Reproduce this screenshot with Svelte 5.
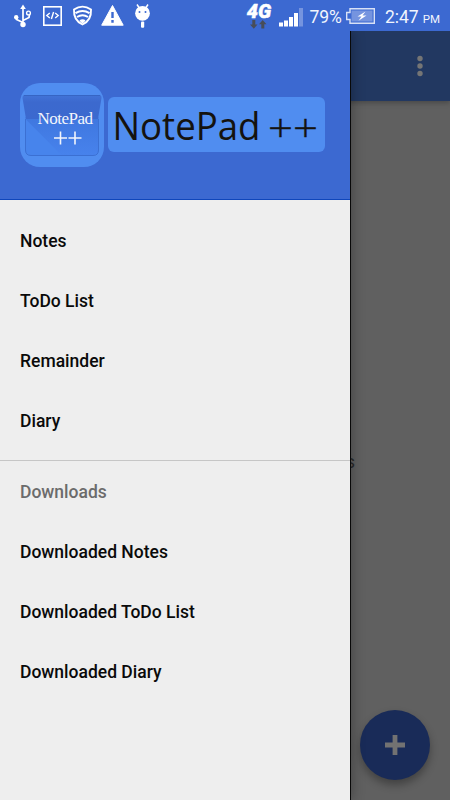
<script lang="ts">
  interface Section {
    title?: string;
    items: string[];
  }

  const sections: Section[] = [
    { items: ['Notes', 'ToDo List', 'Remainder', 'Diary'] },
    { title: 'Downloads', items: ['Downloaded Notes', 'Downloaded ToDo List', 'Downloaded Diary'] },
  ];

  const battery = 79;
  const time = '2:47';

  let selected = $state<string | null>(null);
</script>

<div class="screen">
  <header class="status-bar">
    <svg class="notifications" viewBox="0 0 160 31" width="160" height="31" aria-hidden="true">
      <!-- usb -->
      <g fill="none" stroke="#fff" stroke-width="1.7">
        <path d="M23 7v17M16.5 18v1.5l6.5 3M29.5 14.5l-.5 3-6 3" />
        <circle cx="28.5" cy="13" r="1.9" stroke-width="1.4" />
      </g>
      <path d="M23 4.5l2.8 4.5h-5.6z" fill="#fff" />
      <circle cx="16.2" cy="17.3" r="2.2" fill="#fff" />
      <circle cx="23" cy="24.5" r="2.7" fill="#fff" />
      <!-- developer mode -->
      <rect x="43.8" y="6.8" width="17.4" height="18.4" fill="none" stroke="#fff" stroke-width="1.6" />
      <path d="M49.8 13l-3 2.5 3 2.5M55.2 13l3 2.5-3 2.5M53.6 12l-2.2 7" fill="none" stroke="#fff" stroke-width="1.4" />
      <!-- wifi shield -->
      <path d="M74 9.5q8.5-5.8 17 0c.4 7-3 12.5-8.5 15-5.5-2.5-8.9-8-8.5-15z" fill="none" stroke="#fff" stroke-width="1.9" />
      <path d="M75.5 13.2q7-4.5 14 0M77 17q5.5-3.6 11 0" fill="none" stroke="#fff" stroke-width="2" />
      <path d="M79.5 20.2q3-1.8 6 0-.8 2-3 3.2-2.2-1.2-3-3.2z" fill="#fff" />
      <!-- warning -->
      <path d="M112.5 5.5l10.700 19.700h-21.500z" fill="#fff" stroke="#fff" stroke-width="1" stroke-linejoin="round" />
      <path d="M112.5 12v6M112.5 20v2.8" stroke="#3c69d1" stroke-width="2.4" />
      <!-- android head -->
      <path d="M137 4.500l3 4.500M148 4.500l-3 4.500" stroke="#fff" stroke-width="1.5" />
      <circle cx="142.5" cy="13.3" r="7.4" fill="#fff" />
      <rect x="141" y="21.5" width="3.2" height="6.2" rx="1" fill="#fff" />
      <circle cx="139.5" cy="12" r="1" fill="#3c69d1" />
      <circle cx="145.5" cy="12" r="1" fill="#3c69d1" />
    </svg>

    <div class="system">
      <div class="network">
        <span class="generation">4G</span>
        <svg viewBox="0 0 18 9" width="18" height="9" aria-hidden="true">
          <path d="M3.3 0h3v4.500h2.200L4.800 8.700 1 4.500h2.300zM12.300 8.500h3V4.300h2.200L13.700 0 10 4.300h2.300z" fill="#484d58" />
        </svg>
      </div>
      <svg class="signal" viewBox="0 0 24 19" width="24" height="19" aria-hidden="true">
        <path d="M0 14.500h4v4H0zM5 12.500h4v6H5zM10 9h4v9.500h-4zM15 5h4v13.500h-4z" fill="#fff" />
        <path d="M20 0h4v18.500h-4z" fill="#7594df" />
      </svg>
      <span class="percent">{battery}%</span>
      <svg class="battery" viewBox="0 0 29 16" width="29" height="16" aria-hidden="true">
        <path d="M4 .7h24.300v14.600H4V11.500H.7v-7H4z" fill="#3c69d1" stroke="#d8e1f6" stroke-width="1.4" />
        <path d="M5.500 2.500h21v11h-21z" fill="#7594df" />
        <path d="M19.500 3.500l-8 5h4l-3 4.300 8-5.300h-4z" fill="#fff" />
      </svg>
      <span class="clock">{time}<small>PM</small></span>
    </div>
  </header>

  <main class="stage">
    <div class="page">
      <div class="toolbar">
        <button class="overflow" aria-label="More options">
          <svg viewBox="0 0 6 22" width="6" height="22" aria-hidden="true">
            <circle cx="3" cy="3.5" r="2.7" />
            <circle cx="3" cy="11" r="2.7" />
            <circle cx="3" cy="18.5" r="2.7" />
          </svg>
        </button>
      </div>
      <div class="empty">No Notes</div>
      <button class="fab" aria-label="Add note">
        <svg viewBox="0 0 20 20" width="20" height="20" aria-hidden="true">
          <path d="M7.600 0h4.800v7.600H20v4.800h-7.600V20H7.600v-7.600H0V7.600h7.600z" fill="#727272" />
        </svg>
      </button>
    </div>

    <nav class="drawer">
      <div class="brand">
        <svg class="logo" viewBox="0 0 84 84" width="84" height="84" role="img" aria-label="NotePad ++">
          <defs>
            <linearGradient id="sheet" x1="0" y1="0" x2="0" y2="1">
              <stop offset="0" stop-color="#3f77df" />
              <stop offset="1" stop-color="#4782ec" />
            </linearGradient>
            <linearGradient id="flap" x1="0" y1="0" x2="0" y2="1">
              <stop offset="0" stop-color="#4274d8" />
              <stop offset="0.3" stop-color="#3c69ce" />
              <stop offset="1" stop-color="#3b69cf" />
            </linearGradient>
          </defs>
          <rect width="84" height="84" rx="20" fill="#508df0" />
          <path d="M5.500 34v33q0 5 5 5h63q5 0 5-5V34z" fill="url(#sheet)" />
          <path d="M5.500 36l36 36h-31q-5 0-5-5z" fill="#4784ec" />
          <path d="M4.500 12h75q2 0 2 3l-3.500 21H6L2.500 15q0-3 2-3z" fill="url(#flap)" />
          <path d="M4 12.500h76" stroke="#3665c4" stroke-width="1" />
          <path d="M5.500 36v31q0 5.500 5.500 5.500h62q5.500 0 5.500-5.500V36" fill="none" stroke="#3b70d3" stroke-width="1" />
          <text x="17.5" y="41" font-size="17" textLength="55.5">NotePad</text>
          <path d="M34 55h13M40.500 48.500v13M48.500 55h13M55 48.500v13" stroke="#f2f5fc" stroke-width="1.6" />
        </svg>
        <div class="wordmark">
          <svg viewBox="0 0 217 55" width="217" height="55">
            <text x="4.5" y="42.5" font-size="38" textLength="148" lengthAdjust="spacingAndGlyphs">NotePad</text>
            <text class="plus" x="160" y="45" font-size="38" textLength="50" lengthAdjust="spacingAndGlyphs">++</text>
          </svg>
        </div>
      </div>

      {#each sections as section, i (i)}
        <section>
          {#if section.title}
            <h2>{section.title}</h2>
          {/if}
          {#each section.items as item (item)}
            <button class="item" class:selected={selected === item} onclick={() => (selected = item)}>
              {item}
            </button>
          {/each}
        </section>
      {/each}
    </nav>
  </main>
</div>

<style>
  :global(body) {
    margin: 0;
    background: #606060;
  }

  .screen {
    display: flex;
    flex-direction: column;
    width: 450px;
    height: 800px;
    overflow: hidden;
    font-family: Roboto, 'Liberation Sans', sans-serif;
  }

  button {
    padding: 0;
    border: 0;
    background: none;
    font: inherit;
    cursor: pointer;
  }

  svg {
    display: block;
  }

  .status-bar {
    display: flex;
    justify-content: space-between;
    height: 31px;
    flex: none;
    background: #3c69d1;
    color: #f1f5fd;
  }

  .system {
    display: flex;
    align-items: center;
    padding-right: 10px;
  }

  .network {
    display: flex;
    flex-direction: column;
    align-items: center;
    width: 27px;
    margin-right: 7px;
  }

  .network svg {
    margin-right: 2px;
  }

  .generation {
    font-size: 20px;
    font-weight: 900;
    font-style: italic;
    line-height: 17px;
    color: #fff;
    -webkit-text-stroke: 0.4px #fff;
  }

  .signal {
    margin-top: 3px;
    margin-right: 6px;
  }

  .percent {
    margin-top: 2px;
    font-size: 17.5px;
  }

  .battery {
    margin: 1px 10px 0 4px;
  }

  .clock {
    margin-top: 2px;
    font-size: 17.5px;
  }

  .clock small {
    margin-left: 4px;
    font-size: 11.5px;
  }

  .stage {
    position: relative;
    flex: 1;
    overflow: hidden;
    background: #606060;
  }

  .page {
    display: flex;
    flex-direction: column;
    height: 100%;
  }

  .toolbar {
    display: flex;
    align-items: center;
    justify-content: flex-end;
    height: 70px;
    flex: none;
    padding-right: 27px;
    background: #223861;
    box-shadow: 0 2px 5px rgba(0, 0, 0, 0.25);
  }

  .overflow {
    fill: #757575;
  }

  .empty {
    display: flex;
    flex: 1;
    align-items: center;
    justify-content: flex-end;
    padding: 21px 95px 0 0;
    font-size: 18px;
    color: #2b2b2b;
  }

  .fab {
    position: absolute;
    right: 20px;
    bottom: 20px;
    display: grid;
    place-items: center;
    width: 70px;
    height: 70px;
    border-radius: 50%;
    background: #192b58;
    box-shadow: 0 5px 9px rgba(0, 0, 0, 0.32);
  }

  .drawer {
    position: absolute;
    inset: 0 auto 0 0;
    width: 350px;
    background: #eee;
    box-shadow: 1px 0 0 #080808, 2px 0 12px rgba(0, 0, 0, 0.3);
  }

  .brand {
    display: flex;
    align-items: center;
    gap: 4px;
    box-sizing: border-box;
    height: 169px;
    padding: 19px 20px 0;
    background: #3c69d1;
    border-bottom: 1px solid #0f46bb;
  }

  .logo {
    flex: none;
    fill: #f2f5fc;
    font-family: 'Liberation Serif', serif;
  }

  .wordmark {
    flex: none;
    border-radius: 6px;
    background: #508df0;
    fill: #15130f;
    font-family: 'Open Sans', 'Noto Sans', sans-serif;
  }

  .plus {
    font-weight: 300;
    stroke: #15130f;
    stroke-width: 0.4px;
  }

  section {
    padding: 10px 0;
  }

  section + section {
    padding-top: 0;
    border-top: 1px solid #c6c6c6;
  }

  h2,
  .item {
    display: flex;
    align-items: center;
    box-sizing: border-box;
    width: 100%;
    height: 60px;
    margin: 0;
    padding: 2px 20px 0;
    font-size: 17.5px;
    font-weight: 500;
    color: #0a0a0a;
  }

  h2 {
    color: #6b6b6b;
  }

  .item.selected {
    background: #dcdcdc;
  }
</style>
